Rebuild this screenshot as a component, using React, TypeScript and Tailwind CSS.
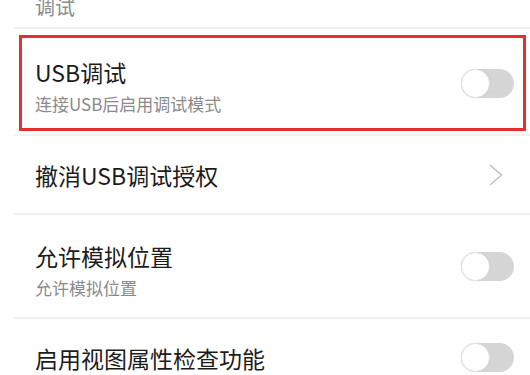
const font = { fontFamily: '"Noto Sans CJK SC", "Noto Sans", sans-serif' };

function Toggle() {
  return (
    <div className="flex h-[29px] w-[53px] shrink-0 items-center rounded-full bg-[#d6d6d6]">
      <div className="h-[29px] w-[29px] rounded-full border border-[#e2e2e2] bg-white shadow-[0_0_2px_rgba(0,0,0,0.08)]" />
    </div>
  );
}

function Divider() {
  return <div className="ml-[14px] h-[2px] bg-[#f1f1f1]" />;
}

function Title({ children }: { children: React.ReactNode }) {
  return <div className="text-[23px] leading-[28px] text-[#1c1c1c]">{children}</div>;
}

function Sub({ children }: { children: React.ReactNode }) {
  return <div className="mt-[7px] text-[17px] leading-[22px] text-[#8a8a8a]">{children}</div>;
}

export default function App() {
  return (
    <div className="h-[375px] w-[530px] overflow-hidden bg-white" style={font}>
      {/* section header, cut off by the top edge */}
      <div className="h-[32px] pl-[35px]">
        <div className="-mt-[5px] text-[20px] leading-[24px] text-[#8c8c8c]">调试</div>
      </div>
      <Divider />

      {/* highlighted row */}
      <div className="ml-[19px] mr-[4px] mt-[6px] flex h-[96px] items-center justify-between border-[3px] border-[#e62e30] pl-[13px] pr-[9px]">
        <div className="pt-[6px]">
          <Title>USB调试</Title>
          <Sub>连接USB后启用调试模式</Sub>
        </div>
        <Toggle />
      </div>
      <div className="mt-[3px]">
        <Divider />
      </div>

      <div className="flex h-[77px] items-center justify-between pl-[35px] pr-[27px]">
        <Title>撤消USB调试授权</Title>
        <svg width="14" height="22" viewBox="0 0 14 22" fill="none" stroke="#c0c0c0" strokeWidth="1.6" strokeLinecap="round" strokeLinejoin="round">
          <polyline points="1.5,1.5 12.5,11 1.5,20.5" />
        </svg>
      </div>
      <Divider />

      <div className="flex h-[102px] items-center justify-between pl-[35px] pr-[16px]">
        <div className="pt-[8px]">
          <Title>允许模拟位置</Title>
          <Sub>允许模拟位置</Sub>
        </div>
        <Toggle />
      </div>
      <Divider />

      <div className="flex h-[77px] items-center justify-between pl-[35px] pr-[16px]">
        <Title>启用视图属性检查功能</Title>
        <Toggle />
      </div>
    </div>
  );
}
